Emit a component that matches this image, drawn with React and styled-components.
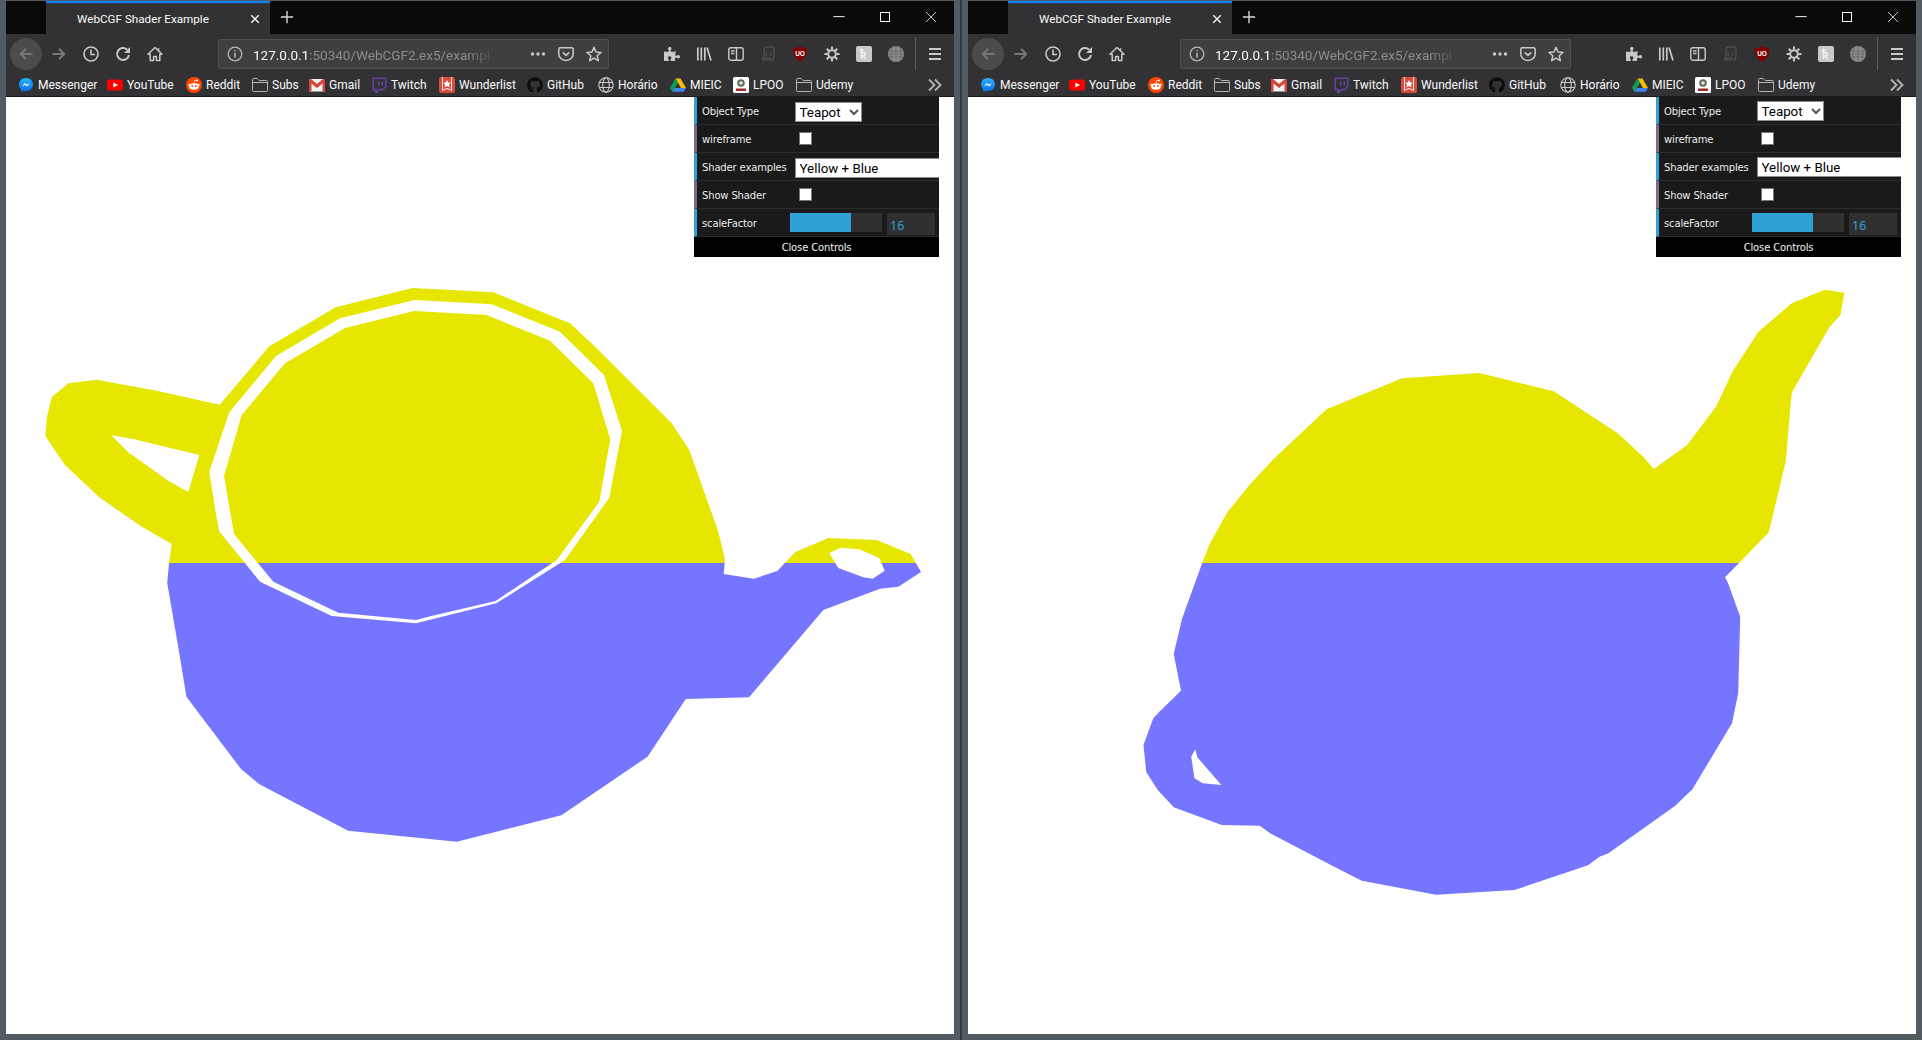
import React from "react";
import styled, { createGlobalStyle } from "styled-components";
import { FaGithub, FaPuzzlePiece } from "react-icons/fa";

const GlobalStyle = createGlobalStyle`
  html, body {
    margin: 0;
    padding: 0;
    overflow: hidden;
    background: #525b5f;
  }
  * {
    box-sizing: border-box;
  }
`;

const UI_FONT = `Roboto, "Noto Sans", "Liberation Sans", sans-serif`;

const Desktop = styled.div`
  display: flex;
  width: 1922px;
  height: 1040px;
  padding: 1px 6px 6px;
  background: #525b5f;
  font-family: ${UI_FONT};
`;

const Divider = styled.div`
  flex: none;
  width: 14px;
  margin-top: -1px;
  margin-bottom: -6px;
  display: flex;
  justify-content: center;

  &::before {
    content: "";
    width: 2px;
    background: #33393c;
  }
`;

const Window = styled.div`
  flex: none;
  width: 948px;
  display: flex;
  flex-direction: column;
`;

const TitleBar = styled.div`
  flex: none;
  height: 33px;
  display: flex;
  background: #0a0a0b;
  color: #f9f9fa;
`;

const Tab = styled.div`
  width: 224px;
  margin-left: 40px;
  display: flex;
  align-items: center;
  padding: 1px 9px 0 31px;
  background: #323234;
  border-top: 2px solid #0a84ff;
  font-size: 11.7px;
`;

const TabTitle = styled.span`
  flex: 1;
  white-space: nowrap;
`;

const NewTab = styled.div`
  width: 34px;
  padding-bottom: 2px;
  display: flex;
  align-items: center;
  justify-content: center;
`;

const WindowControls = styled.div`
  margin-left: auto;
  display: flex;
`;

const WindowControl = styled.div`
  width: 46px;
  display: flex;
  align-items: center;
  justify-content: center;
  margin-top: -2px;
`;

const Toolbar = styled.div`
  flex: none;
  height: 36px;
  display: flex;
  align-items: center;
  padding: 4px 0 0 4px;
  background: #323234;
  color: #c9c9ca;
`;

const ToolSlot = styled.div`
  flex: none;
  width: 32px;
  height: 32px;
  margin-right: ${(p) => (p.$round ? "1px" : "0")};
  display: flex;
  align-items: center;
  justify-content: center;
  border-radius: 50%;
  background: ${(p) => (p.$round ? "#4b4b4d" : "transparent")};
  color: ${(p) => (p.$dim ? "#77777a" : "inherit")};
`;

const UrlBar = styled.div`
  flex: none;
  width: 391px;
  height: 30px;
  margin: 0 47px;
  display: flex;
  align-items: center;
  gap: 10px;
  padding: 0 6px 0 8px;
  background: #3f3f41;
  border: 1px solid #4f4f51;
  border-radius: 2px;
`;

const UrlText = styled.div`
  width: 243px;
  margin-right: auto;
  padding-top: 1px;
  overflow: hidden;
  white-space: nowrap;
  font-size: 13.5px;
  color: #8c8c8e;
  mask-image: linear-gradient(to right, #000 88%, transparent 100%);

  b {
    font-weight: 400;
    color: #f9f9fa;
  }
`;

const UrlActions = styled.div`
  display: flex;
  align-items: center;
  gap: 12px;
`;

const ToolSeparator = styled.div`
  flex: none;
  width: 1px;
  height: 34px;
  margin: 0 3px;
  background: #5c5c5e;
`;

const BookmarksBar = styled.div`
  flex: none;
  height: 27px;
  display: flex;
  align-items: center;
  padding: 3px 0 0 12px;
  background: #323234;
  border-bottom: 1px solid #18181a;
`;

const Bookmark = styled.div`
  flex: none;
  width: ${(p) => p.$width}px;
  display: flex;
  align-items: center;
  gap: 4px;
  font-size: 12px;
  color: #f9f9fa;
  white-space: nowrap;
`;

const MoreBookmarks = styled.div`
  margin-left: auto;
  width: 38px;
  display: flex;
  justify-content: center;
  color: #b5b5b6;
`;

const Viewport = styled.div`
  flex: 1;
  position: relative;
  background: #fff;
  min-height: 0;
`;

const Scene = styled.svg`
  display: block;
  width: 100%;
  height: 100%;
`;

/* dat.GUI panel floats over the canvas */
const Panel = styled.div`
  position: absolute;
  top: 0;
  right: 15px;
  width: 245px;
  overflow: hidden;
  color: #eee;
  font-family: "DejaVu Sans", sans-serif;
  font-size: 10px;
  letter-spacing: -0.15px;
`;

const Row = styled.div`
  height: 28px;
  display: flex;
  align-items: center;
  padding-left: 5px;
  background: #1a1a1a;
  border-left: 3px solid ${(p) => p.$accent};
  border-bottom: 1px solid #2c2c2c;
  text-shadow: 0 -1px 0 #111;
`;

const Label = styled.span`
  flex: none;
  width: ${(p) => p.$width || 93}px;
  padding-top: 1px;
  white-space: nowrap;
`;

const SelectWrap = styled.div`
  position: relative;
  flex: none;
  margin-top: ${(p) => p.$offset}px;
`;

const Select = styled.select`
  display: block;
  appearance: none;
  width: ${(p) => p.$width}px;
  height: 20px;
  padding: 0 0 0 3.5px;
  border: 1px solid #8a8a8a;
  border-radius: 0;
  background: #fff;
  color: #000;
  font-family: Roboto, sans-serif;
  font-size: 13.33px;
`;

const Caret = styled.svg`
  position: absolute;
  top: 7px;
  left: 54px;
`;

const Check = styled.input`
  appearance: none;
  flex: none;
  width: 13px;
  height: 13px;
  margin: 0 0 0 4px;
  background: #fff;
  border: 1px solid #767676;
`;

const Slider = styled.div`
  flex: none;
  align-self: flex-start;
  width: 92px;
  height: 19px;
  margin-top: 4px;
  background: #303030;
`;

const SliderFill = styled.div`
  height: 100%;
  background: #2fa1d6;
`;

const NumberBox = styled.input`
  flex: none;
  align-self: flex-start;
  width: 48px;
  height: 22px;
  margin: 4px 0 0 5px;
  padding: 2px 0 0 3px;
  border: 0;
  background: #303030;
  color: #2fa1d6;
  font-family: "Noto Sans", sans-serif;
  font-size: 12.5px;
`;

const CloseButton = styled.div`
  height: 20px;
  display: flex;
  align-items: center;
  justify-content: center;
  background: #000;
  text-shadow: 0 -1px 0 #111;
`;

function Glyph({ size = 16, children, ...rest }) {
  return (
    <svg width={size} height={size} viewBox="0 0 16 16" fill="none" stroke="currentColor" {...rest}>
      {children}
    </svg>
  );
}

const BackIcon = () => (
  <Glyph strokeWidth="2">
    <path d="M14.5 8H3M8 2.8 2.8 8 8 13.2" />
  </Glyph>
);
const ForwardIcon = () => (
  <Glyph strokeWidth="2">
    <path d="M1.5 8H13M8 2.8 13.2 8 8 13.2" />
  </Glyph>
);
const HistoryIcon = () => (
  <Glyph strokeWidth="1.6">
    <circle cx="8" cy="8" r="7" />
    <path d="M8 3.5V8.5H12" />
  </Glyph>
);
const ReloadIcon = () => (
  <Glyph strokeWidth="2">
    <path d="M14 9a6 6 0 1 1-2-5.6" />
    <path d="M15 1v6H9z" fill="currentColor" stroke="none" />
  </Glyph>
);
const HomeIcon = () => (
  <Glyph strokeWidth="1.5">
    <path d="M8 1.5 1 8.2h2.2v6.3h3.4v-4h2.8v4h3.4V8.2H15z" strokeLinejoin="round" />
    <path d="M11.5 2.2v2.5" />
  </Glyph>
);
const InfoIcon = () => (
  <Glyph strokeWidth="1.3" color="#b5b5b6">
    <circle cx="8" cy="8" r="6.8" />
    <path d="M8 7v4.5M8 4.2v1.4" strokeWidth="1.6" />
  </Glyph>
);
const DotsIcon = () => (
  <Glyph stroke="none" fill="currentColor">
    <circle cx="2.5" cy="8" r="1.7" />
    <circle cx="8" cy="8" r="1.7" />
    <circle cx="13.5" cy="8" r="1.7" />
  </Glyph>
);
const PocketIcon = () => (
  <Glyph strokeWidth="1.5">
    <path d="M2.2 1.8h11.6A1.4 1.4 0 0 1 15.2 3.2V8a7.2 6.4 0 0 1-14.4 0V3.2A1.4 1.4 0 0 1 2.2 1.8z" />
    <path d="M4.8 6.3 8 9.4l3.2-3.1" strokeWidth="1.7" />
  </Glyph>
);
const StarIcon = () => (
  <Glyph strokeWidth="1.5">
    <path d="M8 1.4 10 6l5 .5-3.8 3.3 1.1 4.9L8 12.2l-4.3 2.5 1.1-4.9L1 6.5 6 6z" strokeLinejoin="round" />
  </Glyph>
);
const LibraryIcon = () => (
  <Glyph strokeWidth="1.7">
    <path d="M1.8 1.5v13M5.3 1.5v13M8.8 1.5v13M11 1.5l4 13" />
  </Glyph>
);
const SidebarIcon = () => (
  <Glyph strokeWidth="1.4">
    <rect x="0.8" y="1.8" width="14.4" height="12.4" rx="2" />
    <path d="M8.5 2v12" />
    <path d="M3 5h3.5M3 7.5h3.5" />
  </Glyph>
);
const ScriptIcon = () => (
  <Glyph strokeWidth="1" color="#58585a">
    <path d="M4 13V3a2 2 0 0 1 2-2h8M14 1v10l-1 3H2l1-2h8" />
    <path d="M7 6 5.5 8 7 10M10 6l1.5 2L10 10" />
  </Glyph>
);
const UBlockIcon = () => (
  <svg width="16" height="16" viewBox="0 0 16 16">
    <path d="M8 .5 15 2.6c0 6-1.5 10.3-7 13-5.500-2.700-7-7-7-13z" fill="#800000" />
    <text x="8" y="10" textAnchor="middle" fontSize="6.500" fontWeight="700" fontFamily="Liberation Sans" fill="#fff">
      UO
    </text>
  </svg>
);
const GearIcon = () => (
  <Glyph strokeWidth="2">
    <circle cx="8" cy="8" r="3.8" />
    <path d="M8 .5v3M8 12.500v3M.5 8h3M12.500 8h3M2.700 2.700l2.100 2.100M11.200 11.200l2.100 2.100M2.700 13.300l2.100-2.100M11.200 4.800l2.100-2.100" />
  </Glyph>
);
const KeeIcon = () => (
  <svg width="16" height="16" viewBox="0 0 16 16" fill="none">
    <rect width="16" height="16" rx="2" fill="#c9c9ca" />
    <path d="M3.500 4.500h4M5.500 2.500V13M5.500 7.500c2-1.500 4-1 3.700 1-.2 1-1.500 1.500-2.700 1.500l3.500 3" stroke="#f4f4f4" strokeWidth="1.300" />
  </svg>
);
const GlobeFilledIcon = () => (
  <svg width="16" height="16" viewBox="0 0 16 16" fill="#8e8e90" stroke="#5f5f61" strokeWidth=".7">
    <circle cx="8" cy="8" r="8" stroke="none" />
    <path d="M0 5h16M0 8h16M0 11h16M8 0v16M4.500 .8c-2 4-2 10.400 0 14.400M11.500 .8c2 4 2 10.400 0 14.400" fill="none" />
  </svg>
);
const MenuIcon = () => (
  <Glyph strokeWidth="2">
    <path d="M2 3h12M2 8h12M2 13h12" />
  </Glyph>
);

const MessengerIcon = () => (
  <svg width="16" height="16" viewBox="0 0 16 16">
    <defs>
      <linearGradient id="msgr" x1="0" y1="0" x2="0" y2="1">
        <stop offset="0" stopColor="#28b4fb" />
        <stop offset="1" stopColor="#0a6cf0" />
      </linearGradient>
    </defs>
    <path d="M8 1c-4 0-7 2.800-7 6.500 0 2 .9 3.700 2.300 4.900V15l2.300-1.300c.8.200 1.600.3 2.400.3 4 0 7-2.800 7-6.500S12 1 8 1z" fill="url(#msgr)" />
    <path d="m3.800 9.700 3-3.700 2 1.800 3.300-1.900-3 3.700-2-1.800z" fill="#fff" />
  </svg>
);
const YoutubeIcon = () => (
  <svg width="16" height="16" viewBox="0 0 16 16">
    <rect y="2.500" width="16" height="11" rx="2.500" fill="#f00" />
    <path d="M6.300 5.500 11 8l-4.700 2.500z" fill="#fff" />
  </svg>
);
const RedditIcon = () => (
  <svg width="16" height="16" viewBox="0 0 16 16">
    <circle cx="8" cy="8" r="8" fill="#ff4500" />
    <ellipse cx="8" cy="9.500" rx="4.800" ry="3.200" fill="#fff" />
    <circle cx="3.500" cy="8" r="1.200" fill="#fff" />
    <circle cx="12.500" cy="8" r="1.200" fill="#fff" />
    <circle cx="11" cy="3.500" r="1" fill="#fff" />
    <path d="M8 6.500 8.800 3.200 11 3.500" stroke="#fff" strokeWidth=".7" fill="none" />
    <circle cx="6.200" cy="9" r=".9" fill="#ff4500" />
    <circle cx="9.800" cy="9" r=".9" fill="#ff4500" />
  </svg>
);
const FolderIcon = () => (
  <svg width="16" height="16" viewBox="0 0 16 16" fill="none" stroke="#b5b5b6">
    <path d="M.5 13.500V2.500a1 1 0 0 1 1-1h3.700l2 2h7.300a1 1 0 0 1 1 1v9a1 1 0 0 1-1 1h-13a1 1 0 0 1-1-1z" />
    <path d="M.5 5.500h15" />
  </svg>
);
const GmailIcon = () => (
  <svg width="16" height="16" viewBox="0 0 16 16">
    <rect y="2" width="16" height="12.500" fill="#f2f2f2" />
    <path d="M0 2h2l6 5 6-5h2v12.500h-2.500V6.500L8 11 2.500 6.500v8H0z" fill="#d44638" />
  </svg>
);
const TwitchIcon = () => (
  <svg width="16" height="16" viewBox="0 0 16 16">
    <path d="M1.500.5H15.500v9.500L12 13.500H8.500L6 16H4v-2.500H1.500z" fill="#6441a4" />
    <path d="M3 2h11v7.300l-2.500 2.500H8l-2 2v-2H3z" fill="#323234" />
    <path d="M7 4.500h1.500v4H7zM10.500 4.500H12v4h-1.500z" fill="#6441a4" />
  </svg>
);
const WunderlistIcon = () => (
  <svg width="16" height="16" viewBox="0 0 16 16">
    <rect width="16" height="16" rx="2" fill="#db4c3f" />
    <path d="M3 0h10v14l-5-2-5 2z" fill="#f7ece3" />
    <path d="M4 0h8v12.500l-4-1.600-4 1.600z" fill="#db4c3f" />
    <path d="m8 3 1.200 2.500 2.700.3-2 1.800.6 2.700L8 9l-2.500 1.300.6-2.700-2-1.800 2.700-.3z" fill="#fff" />
  </svg>
);
const GlobeOutlineIcon = () => (
  <Glyph strokeWidth="1.100" color="#c9c9ca">
    <circle cx="8" cy="8" r="7.200" />
    <ellipse cx="8" cy="8" rx="3.300" ry="7.200" />
    <path d="M1.200 5.500h13.600M1.200 10.500h13.600" />
  </Glyph>
);
const DriveIcon = () => (
  <svg width="16" height="16" viewBox="0 0 16 16">
    <path d="M5.500 1.500h5L16 11h-5z" fill="#fbbc04" />
    <path d="M5.500 1.500 0 11l2.500 3.800L8 6z" fill="#0f9d58" />
    <path d="M5 11h11l-2.500 3.800h-11z" fill="#4285f4" />
  </svg>
);
const FeupIcon = () => (
  <svg width="16" height="16" viewBox="0 0 16 16">
    <rect width="16" height="16" rx="1.500" fill="#fff" />
    <circle cx="8" cy="6" r="3.800" fill="#5b6b58" />
    <circle cx="8" cy="6" r="1.800" fill="#e6e6e6" />
    <rect x="3" y="11.500" width="10" height="2.500" fill="#a4272b" />
  </svg>
);
const ChevronsIcon = () => (
  <Glyph strokeWidth="1.800">
    <path d="M2 2.500 7.500 8 2 13.500M8 2.500 13.500 8 8 13.500" />
  </Glyph>
);

const BOOKMARKS = [
  { name: "Messenger", width: 89, icon: <MessengerIcon /> },
  { name: "YouTube", width: 79, icon: <YoutubeIcon /> },
  { name: "Reddit", width: 66, icon: <RedditIcon /> },
  { name: "Subs", width: 57, icon: <FolderIcon /> },
  { name: "Gmail", width: 62, icon: <GmailIcon /> },
  { name: "Twitch", width: 68, icon: <TwitchIcon /> },
  { name: "Wunderlist", width: 88, icon: <WunderlistIcon /> },
  { name: "GitHub", width: 71, icon: <FaGithub size={16} color="#0b0b0c" /> },
  { name: "Horário", width: 72, icon: <GlobeOutlineIcon /> },
  { name: "MIEIC", width: 63, icon: <DriveIcon /> },
  { name: "LPOO", width: 63, icon: <FeupIcon /> },
  { name: "Udemy", width: 60, icon: <FolderIcon /> },
];

function ControlPanel({ selectOffset }) {
  return (
    <Panel>
      <Row $accent="#2fa1d6">
        <Label>Object Type</Label>
        <SelectWrap $offset={selectOffset}>
          <Select $width={67} defaultValue="Teapot">
            <option>Teapot</option>
          </Select>
          <Caret width="10" height="7" viewBox="0 0 10 7" fill="none" stroke="#555" strokeWidth="2">
            <path d="M1 1l4 4 4-4" />
          </Caret>
        </SelectWrap>
      </Row>
      <Row $accent="#806787">
        <Label>wireframe</Label>
        <Check type="checkbox" />
      </Row>
      <Row $accent="#2fa1d6">
        <Label>Shader examples</Label>
        <SelectWrap $offset={selectOffset}>
          <Select $width={160} defaultValue="Yellow + Blue">
            <option>Yellow + Blue</option>
          </Select>
        </SelectWrap>
      </Row>
      <Row $accent="#806787">
        <Label>Show Shader</Label>
        <Check type="checkbox" />
      </Row>
      <Row $accent="#2fa1d6">
        <Label $width={88}>scaleFactor</Label>
        <Slider>
          <SliderFill style={{ width: `${(61 / 92) * 100}%` }} />
        </Slider>
        <NumberBox type="text" defaultValue="16" readOnly />
      </Row>
      <CloseButton>Close Controls</CloseButton>
    </Panel>
  );
}

function BrowserWindow({ selectOffset, children }) {
  return (
    <Window>
      <TitleBar>
        <Tab>
          <TabTitle>WebCGF Shader Example</TabTitle>
          <Glyph size={12} strokeWidth="1.800">
            <path d="M3 3l10 10M13 3 3 13" />
          </Glyph>
        </Tab>
        <NewTab>
          <Glyph size={14} strokeWidth="1.600" color="#d8d8d9">
            <path d="M8 1v14M1 8h14" />
          </Glyph>
        </NewTab>
        <WindowControls>
          <WindowControl>
            <Glyph size={12} strokeWidth="1.300">
              <path d="M.5 7.500h15" />
            </Glyph>
          </WindowControl>
          <WindowControl>
            <svg width="10" height="10" viewBox="0 0 10 10" fill="none" stroke="currentColor">
              <rect x=".5" y=".5" width="9" height="9" />
            </svg>
          </WindowControl>
          <WindowControl>
            <svg width="10" height="10" viewBox="0 0 10 10" fill="none" stroke="currentColor" strokeWidth=".8">
              <path d="M0 0l10 10M10 0 0 10" />
            </svg>
          </WindowControl>
        </WindowControls>
      </TitleBar>

      <Toolbar>
        <ToolSlot $round $dim><BackIcon /></ToolSlot>
        <ToolSlot $dim><ForwardIcon /></ToolSlot>
        <ToolSlot><HistoryIcon /></ToolSlot>
        <ToolSlot><ReloadIcon /></ToolSlot>
        <ToolSlot><HomeIcon /></ToolSlot>
        <UrlBar>
          <InfoIcon />
          <UrlText><b>127.0.0.1</b>:50340/WebCGF2.ex5/exampl</UrlText>
          <UrlActions>
            <DotsIcon />
            <PocketIcon />
            <StarIcon />
          </UrlActions>
        </UrlBar>
        <ToolSlot><FaPuzzlePiece size={16} /></ToolSlot>
        <ToolSlot><LibraryIcon /></ToolSlot>
        <ToolSlot><SidebarIcon /></ToolSlot>
        <ToolSlot><ScriptIcon /></ToolSlot>
        <ToolSlot><UBlockIcon /></ToolSlot>
        <ToolSlot><GearIcon /></ToolSlot>
        <ToolSlot><KeeIcon /></ToolSlot>
        <ToolSlot><GlobeFilledIcon /></ToolSlot>
        <ToolSeparator />
        <ToolSlot><MenuIcon /></ToolSlot>
      </Toolbar>

      <BookmarksBar>
        {BOOKMARKS.map((b) => (
          <Bookmark key={b.name} $width={b.width}>
            {b.icon}
            <span>{b.name}</span>
          </Bookmark>
        ))}
        <MoreBookmarks><ChevronsIcon /></MoreBookmarks>
      </BookmarksBar>

      <Viewport>
        {children}
        <ControlPanel selectOffset={selectOffset} />
      </Viewport>
    </Window>
  );
}

// outlines in screen coordinates, the viewBox of each scene is its window's viewport
const poly = (pts) => "M" + pts.map((p) => p.join(" ")).join("L") + "Z";

const SIDE_TEAPOT = poly([
  [171.7, 544], [141.7, 526.7], [99.3, 497.3], [65, 465], [45.3, 436], [47, 416.7], [51.7, 397.3],
  [68.3, 383.3], [96.7, 379.7], [156.7, 390.7], [219.7, 404.7], [269.3, 346.3], [335.7, 307.3],
  [412.7, 288], [493.3, 292.3], [570, 323.3], [593.3, 345], [671.7, 423.3], [689.3, 450],
  [718.3, 531.7], [725, 559.3], [723.7, 574], [754, 578.7], [777.3, 571], [795, 552.3], [828.3, 538],
  [876.7, 540], [910.7, 554], [921, 572], [898.3, 586.7], [880, 588.7], [823.3, 610], [749, 697.3],
  [685.8, 699], [647.5, 756.7], [561.4, 815.3], [456.9, 841.7], [348.2, 830.7], [259, 784], [241, 769],
  [186.4, 696.7], [179.9, 656.7], [167.2, 582.7], [169.1, 562.7],
]);
const SIDE_HANDLE_HOLE = poly([
  [111, 435], [133.3, 439], [199.3, 455], [188.3, 492], [168.3, 480.7], [128.3, 452.3],
]);
const SIDE_SPOUT_HOLE = poly([
  [829.3, 553.3], [840, 547.7], [859.3, 549.3], [879.3, 558], [884.7, 570.7], [872.7, 578.7],
  [863.3, 577.3], [838.3, 568],
]);
const RING_OUTER = poly([
  [414.3, 300], [340, 318.3], [276, 356], [229.3, 412.3], [209.3, 471.7], [215, 508.3], [219, 531],
  [260, 581.7], [331.7, 616], [416, 623.3], [429, 620], [496.3, 603.3], [565, 560], [609.3, 497.7],
  [622, 431], [604, 375], [560, 331.7], [492, 304.3],
]);
const RING_INNER = poly([
  [414.3, 311], [345, 328], [285, 363.3], [241.7, 415], [224, 476], [234, 534], [273.3, 581.7],
  [338.3, 612.7], [416, 620], [428.3, 616.7], [495.6, 601], [556.8, 560], [599.3, 501.7],
  [610.3, 439.3], [593.3, 383.3], [550, 340.7], [486.7, 315],
]);

const BACK_TEAPOT = poly([
  [1209.6, 544], [1227, 512.7], [1249.4, 485], [1273.3, 459.3], [1326.5, 409.3], [1402, 378.3],
  [1479.3, 373], [1553.9, 391.3], [1617.6, 433.3], [1642.4, 456], [1653.9, 469], [1687.2, 445],
  [1716, 406.7], [1733, 370.7], [1758.4, 331.7], [1791.7, 303.3], [1824.5, 289.7], [1844.4, 292.7],
  [1840.4, 315], [1829, 327.7], [1791.7, 392.7], [1785.7, 461.7], [1768.8, 532.3], [1739, 563],
  [1725, 577.3], [1728, 583], [1740.2, 616.7], [1738.2, 693.3], [1732, 723.3], [1692.4, 789.3],
  [1674.9, 806], [1608.4, 853.3], [1599.4, 856.7], [1588, 865.3], [1514.5, 890], [1436, 894.7],
  [1361.8, 880.7], [1342, 870.7], [1270, 833.3], [1259.8, 825.7], [1221.8, 825], [1173.7, 807.3],
  [1157.8, 790], [1146.3, 772.3], [1143.5, 745], [1153.3, 718.3], [1159.4, 711.7], [1181, 690.7],
  [1173.7, 654], [1182.2, 618.3], [1202.7, 561.7],
]);
const BACK_HANDLE_HOLE = poly([
  [1195.3, 749.3], [1197.3, 757.3], [1221.4, 785], [1202.7, 783.3], [1194.5, 778.3], [1191.2, 756.7],
]);

function Teapot({ id, viewBox, d }) {
  return (
    <Scene viewBox={viewBox}>
      <defs>
        <linearGradient id={id} gradientUnits="userSpaceOnUse" x1="0" y1="97" x2="0" y2="1034">
          <stop offset={(563 - 97) / 937} stopColor="#e6e600" />
          <stop offset={(563 - 97) / 937} stopColor="#7575ff" />
        </linearGradient>
      </defs>
      <path d={d} fill={`url(#${id})`} fillRule="evenodd" />
    </Scene>
  );
}

export default function App() {
  return (
    <>
      <GlobalStyle />
      <Desktop>
        <BrowserWindow selectOffset={3}>
          <Teapot
            id="sideSplit"
            viewBox="6 97 948 937"
            d={SIDE_TEAPOT + SIDE_HANDLE_HOLE + SIDE_SPOUT_HOLE + RING_OUTER + RING_INNER}
          />
        </BrowserWindow>
        <Divider />
        <BrowserWindow selectOffset={1}>
          <Teapot id="backSplit" viewBox="968 97 948 937" d={BACK_TEAPOT + BACK_HANDLE_HOLE} />
        </BrowserWindow>
      </Desktop>
    </>
  );
}
